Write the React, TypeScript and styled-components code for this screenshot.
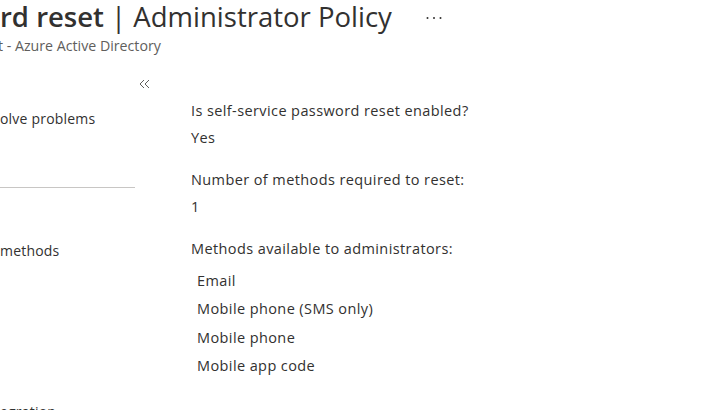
import { createGlobalStyle, styled } from 'styled-components'

const GlobalStyle = createGlobalStyle`
  html, body {
    margin: 0;
    padding: 0;
    background: #ffffff;
    overflow: hidden;
  }
  body {
    width: 715px;
    height: 410px;
    font-family: 'Open Sans', 'Noto Sans', sans-serif;
    color: #323130;
  }
`

const Page = styled.div`
  width: 715px;
  height: 410px;
  overflow: hidden;
  display: flex;
  flex-direction: column;
`

const Header = styled.header`
  display: flex;
  flex-direction: column;
  padding-top: 1px;
`

const TitleRow = styled.div`
  display: flex;
  align-items: center;
  gap: 34px;
`

const Title = styled.h1`
  margin: 0;
  font-size: 27.5px;
  line-height: 32px;
  font-weight: 400;
  white-space: nowrap;
  b {
    font-weight: 600;
  }
`

const More = styled.button`
  border: none;
  background: none;
  padding: 0;
  display: flex;
  align-items: center;
  height: 24px;
  margin-top: 2px;
  color: #323130;
  cursor: pointer;
`

const Subtitle = styled.div`
  font-size: 14.2px;
  line-height: 18px;
  margin-top: 4px;
  color: #605e5c;
  margin-left: -2px;
  white-space: nowrap;
`

const Body = styled.div`
  display: flex;
  flex: 1;
  margin-top: 12px;
`

const Sidebar = styled.nav`
  width: 160px;
  flex-shrink: 0;
  display: flex;
  flex-direction: column;
`

const CollapseRow = styled.div`
  display: flex;
  justify-content: flex-end;
  padding-right: 10px;
  height: 32px;
  align-items: center;
`

const Collapse = styled.button`
  border: none;
  background: none;
  padding: 0;
  display: flex;
  margin-top: 2px;
  cursor: pointer;
`

const NavItem = styled.div<{ $gap?: number }>`
  width: 135px;
  font-size: 14px;
  letter-spacing: 0.2px;
  line-height: 36px;
  white-space: nowrap;
  margin-top: ${p => p.$gap ?? 0}px;
`

const Divider = styled.hr<{ $gap: number }>`
  width: 135px;
  margin: ${p => p.$gap}px 0 0 0;
  border: none;
  border-top: 1px solid #c8c6c4;
`

const Content = styled.main`
  display: flex;
  flex-direction: column;
  padding-left: 31px;
  padding-top: 34px;
  font-size: 14.5px;
  letter-spacing: 0.4px;
`

const Field = styled.section`
  display: flex;
  flex-direction: column;
  gap: 7px;
  margin-bottom: 22px;
  line-height: 20px;
`

const MethodList = styled.ul`
  list-style: none;
  margin: 1px 0 0 0;
  padding: 0 0 0 6px;
  display: flex;
  flex-direction: column;
  li {
    line-height: 28.3px;
  }
`

const methods = ['Email', 'Mobile phone (SMS only)', 'Mobile phone', 'Mobile app code']

export default function App() {
  return (
    <Page>
      <GlobalStyle />
      <Header>
        <TitleRow>
          <Title>
            <b>rd reset</b> | Administrator Policy
          </Title>
          <More aria-label="More">
            <svg width="16" height="4" viewBox="0 0 16 4">
              <circle cx="1.5" cy="2" r="1" fill="#323130" />
              <circle cx="8" cy="2" r="1" fill="#323130" />
              <circle cx="14.5" cy="2" r="1" fill="#323130" />
            </svg>
          </More>
        </TitleRow>
        <Subtitle>t - Azure Active Directory</Subtitle>
      </Header>
      <Body>
        <Sidebar>
          <CollapseRow>
            <Collapse aria-label="Collapse menu">
              <svg width="11" height="10" viewBox="0 0 11 10" fill="none" stroke="#605e5c" strokeWidth="1">
                <path d="M5 1 L1 5 L5 9" />
                <path d="M10 1 L6 5 L10 9" />
              </svg>
            </Collapse>
          </CollapseRow>
          <NavItem $gap={2}>olve problems</NavItem>
          <Divider $gap={50} />
          <NavItem $gap={45}>methods</NavItem>
          <NavItem $gap={125}>egration</NavItem>
        </Sidebar>
        <Content>
          <Field>
            <span>Is self-service password reset enabled?</span>
            <span>Yes</span>
          </Field>
          <Field>
            <span>Number of methods required to reset:</span>
            <span>1</span>
          </Field>
          <Field>
            <span>Methods available to administrators:</span>
            <MethodList>
              {methods.map(m => (
                <li key={m}>{m}</li>
              ))}
            </MethodList>
          </Field>
        </Content>
      </Body>
    </Page>
  )
}
